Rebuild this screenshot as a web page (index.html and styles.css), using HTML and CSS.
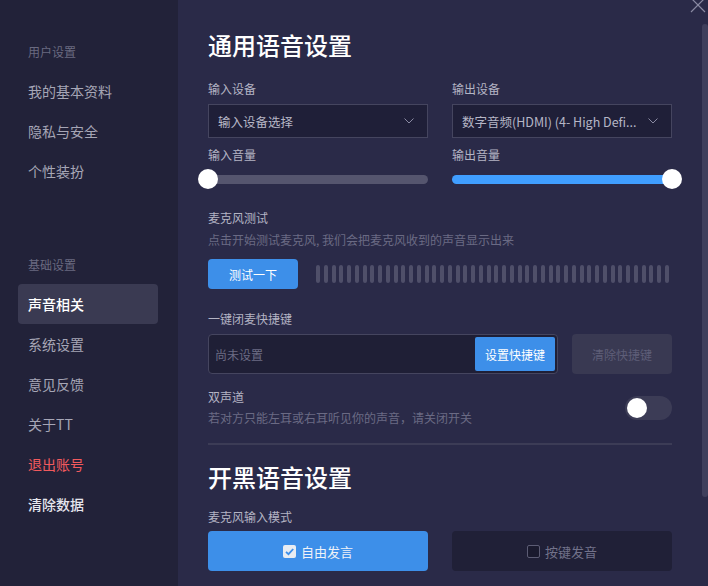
FILE: index.html
```html
<!DOCTYPE html>
<html lang="zh-CN">
<head>
<meta charset="utf-8">
<title>声音相关</title>
<link rel="stylesheet" href="styles.css">
</head>
<body>
<div class="app">
  <aside class="sidebar">
    <div class="group">
      <div class="group-label">用户设置</div>
      <div class="nav-item">我的基本资料</div>
      <div class="nav-item">隐私与安全</div>
      <div class="nav-item">个性装扮</div>
    </div>
    <div class="group group-second">
      <div class="group-label">基础设置</div>
      <div class="nav-item active">声音相关</div>
      <div class="nav-item">系统设置</div>
      <div class="nav-item">意见反馈</div>
      <div class="nav-item">关于TT</div>
      <div class="nav-item danger">退出账号</div>
      <div class="nav-item strong">清除数据</div>
    </div>
  </aside>

  <main class="content">
    <h1 class="title">通用语音设置</h1>

    <div class="two-col">
      <div class="field">
        <div class="label">输入设备</div>
        <div class="select">
          <span class="select-text">输入设备选择</span>
          <svg class="chevron" viewBox="0 0 10 6" width="10" height="6"><path d="M0.5 0.5 L5 5 L9.5 0.5" fill="none" stroke="#8a8aa2" stroke-width="1"/></svg>
        </div>
      </div>
      <div class="field">
        <div class="label">输出设备</div>
        <div class="select">
          <span class="select-text">数字音频(HDMI) (4- High Defi...</span>
          <svg class="chevron" viewBox="0 0 10 6" width="10" height="6"><path d="M0.5 0.5 L5 5 L9.5 0.5" fill="none" stroke="#8a8aa2" stroke-width="1"/></svg>
        </div>
      </div>
    </div>

    <div class="two-col vol-row">
      <div class="field">
        <div class="label">输入音量</div>
        <div class="slider">
          <div class="track"></div>
          <div class="thumb thumb-start"></div>
        </div>
      </div>
      <div class="field">
        <div class="label">输出音量</div>
        <div class="slider">
          <div class="track track-on"></div>
          <div class="thumb thumb-end"></div>
        </div>
      </div>
    </div>

    <section class="mic-test">
      <div class="label">麦克风测试</div>
      <div class="hint">点击开始测试麦克风, 我们会把麦克风收到的声音显示出来</div>
      <div class="test-row">
        <button class="btn-primary btn-test">测试一下</button>
        <div class="meter" id="meter"></div>
      </div>
    </section>

    <section class="shortcut">
      <div class="label">一键闭麦快捷键</div>
      <div class="shortcut-row">
        <div class="shortcut-input">
          <span class="placeholder">尚未设置</span>
          <button class="btn-primary btn-set">设置快捷键</button>
        </div>
        <button class="btn-disabled">清除快捷键</button>
      </div>
    </section>

    <section class="stereo">
      <div class="stereo-text">
        <div class="label">双声道</div>
        <div class="hint">若对方只能左耳或右耳听见你的声音，请关闭开关</div>
      </div>
      <div class="toggle"><div class="knob"></div></div>
    </section>

    <hr class="divider">

    <h1 class="title title-second">开黑语音设置</h1>
    <div class="label">麦克风输入模式</div>
    <div class="two-col mode-row">
      <button class="mode mode-on">
        <span class="check check-on"><svg viewBox="0 0 13 13" width="13" height="13"><path d="M3 6.8 L5.5 9.2 L10.2 4" fill="none" stroke="#3d8fe9" stroke-width="1.8"/></svg></span>
        自由发言
      </button>
      <button class="mode mode-off">
        <span class="check check-off"></span>
        按键发音
      </button>
    </div>
  </main>

  <div class="scrollbar"></div>
  <svg class="close" viewBox="0 0 16 16" width="16" height="16"><path d="M1 1 L15 15 M15 1 L1 15" stroke="#8a8aa2" stroke-width="1.2"/></svg>
</div>
<script>
  var m = document.getElementById('meter');
  for (var i = 0; i < 46; i++) {
    var b = document.createElement('span');
    b.className = 'bar';
    m.appendChild(b);
  }
</script>
</body>
</html>
```

FILE: styles.css
```css
* { box-sizing: border-box; }
html, body {
  margin: 0;
  padding: 0;
  width: 708px;
  height: 586px;
  overflow: hidden;
  background: #2a2a48;
  font-family: "Noto Sans CJK SC", "Noto Sans", sans-serif;
}
button {
  font-family: inherit;
  border: none;
  margin: 0;
  padding: 0;
  cursor: pointer;
}

.app {
  position: relative;
  display: flex;
  width: 708px;
  height: 586px;
}

/* Sidebar */
.sidebar {
  width: 178px;
  flex: none;
  background: #222239;
  padding: 33px 20px 0 18px;
}
.group-label {
  height: 38px;
  line-height: 38px;
  padding-left: 10px;
  font-size: 12px;
  color: #6a6a80;
}
.group-second { margin-top: 55px; }
.nav-item {
  height: 40px;
  line-height: 40px;
  padding-left: 10px;
  font-size: 14px;
  color: #a6a6b6;
  border-radius: 4px;
}
.nav-item.active {
  background: #3a3a52;
  color: #ffffff;
  font-weight: 500;
}
.nav-item.danger { color: #f25a5e; }
.nav-item.strong { color: #e6e6ee; font-weight: 500; }

/* Content */
.content {
  flex: 1;
  padding: 29px 0 0 30px;
}
.content > * { width: 464px; }
.title {
  margin: 0;
  height: 32px;
  line-height: 32px;
  font-size: 24px;
  font-weight: 500;
  color: #ffffff;
}
.label {
  height: 20px;
  line-height: 20px;
  font-size: 12px;
  color: #b4b4c4;
}
.hint {
  height: 20px;
  line-height: 20px;
  font-size: 12px;
  color: #6a6a84;
}

.two-col {
  display: grid;
  grid-template-columns: 220px 220px;
  column-gap: 24px;
}
.two-col:first-of-type { margin-top: 18px; }

.select {
  margin-top: 5px;
  height: 34px;
  border: 1px solid #45455f;
  background: #1f1f38;
  display: flex;
  align-items: center;
  padding: 0 13px 0 9px;
  gap: 8px;
}
.select-text {
  flex: 1;
  min-width: 0;
  font-size: 12.5px;
  color: #b6b6c6;
  white-space: nowrap;
  overflow: hidden;
}
.chevron { flex: none; }

.vol-row { margin-top: 7px; }
.slider {
  position: relative;
  margin-top: 4px;
  height: 20px;
  display: flex;
  align-items: center;
}
.track {
  width: 100%;
  height: 9px;
  border-radius: 5px;
  background: #55556e;
}
.track-on { background: #409eff; }
.thumb {
  position: absolute;
  top: 0;
  width: 20px;
  height: 20px;
  border-radius: 50%;
  background: #ffffff;
}
.thumb-start { left: -10px; }
.thumb-end { right: -10px; }

.mic-test { margin-top: 19px; }
.mic-test .hint { margin-top: 2px; }
.test-row {
  margin-top: 9px;
  display: flex;
  align-items: center;
}
.btn-primary {
  background: #3d8fe9;
  color: #ffffff;
  font-size: 12px;
  border-radius: 4px;
}
.btn-test {
  width: 90px;
  height: 30px;
}
.meter {
  margin-left: 18px;
  width: 353px;
  height: 18px;
  display: flex;
  justify-content: space-between;
}
.bar {
  width: 4px;
  height: 18px;
  border-radius: 2px;
  background: #4f4f69;
}

.shortcut { margin-top: 20px; }
.shortcut-row {
  margin-top: 5px;
  display: flex;
  gap: 14px;
  height: 40px;
}
.shortcut-input {
  width: 350px;
  border: 1px solid #45455f;
  border-radius: 4px;
  background: #1f1f36;
  display: flex;
  align-items: center;
  padding: 2px;
}
.placeholder {
  flex: 1;
  padding-left: 4px;
  font-size: 12px;
  color: #6c6c84;
}
.btn-set {
  width: 80px;
  height: 34px;
  border-radius: 2px;
}
.btn-disabled {
  width: 100px;
  background: #393952;
  color: #5e5e78;
  font-size: 12px;
  border-radius: 4px;
}

.stereo {
  margin-top: 13px;
  display: flex;
  align-items: center;
  justify-content: space-between;
}
.stereo .hint { margin-top: 1px; }
.toggle {
  width: 47px;
  height: 24px;
  border-radius: 12px;
  background: #3c3c56;
  padding: 2px;
}
.knob {
  width: 20px;
  height: 20px;
  border-radius: 50%;
  background: #ffffff;
}

.divider {
  margin: 15px 0 0 0;
  height: 2px;
  border: none;
  background: #3c3c56;
}

.title-second { margin-top: 16px; margin-bottom: 14px; }

.mode-row { margin-top: 4px; }
.mode {
  height: 40px;
  border-radius: 4px;
  font-size: 13px;
  display: flex;
  align-items: center;
  justify-content: center;
  gap: 5px;
}
.mode-on { background: #3d8fe9; color: #eef2f8; }
.mode-off { background: #202037; color: #72728a; }
.check {
  width: 13px;
  height: 13px;
  border-radius: 2px;
  display: inline-flex;
}
.check-on { background: #e8ecf2; }
.check-off { background: #1a1a2e; border: 1px solid #5c5c74; }

.scrollbar {
  position: absolute;
  left: 702px;
  top: 24px;
  width: 6px;
  height: 473px;
  border-radius: 3px;
  background: #3f3f5c;
}
.close {
  position: absolute;
  left: 690px;
  top: -3px;
}
```
